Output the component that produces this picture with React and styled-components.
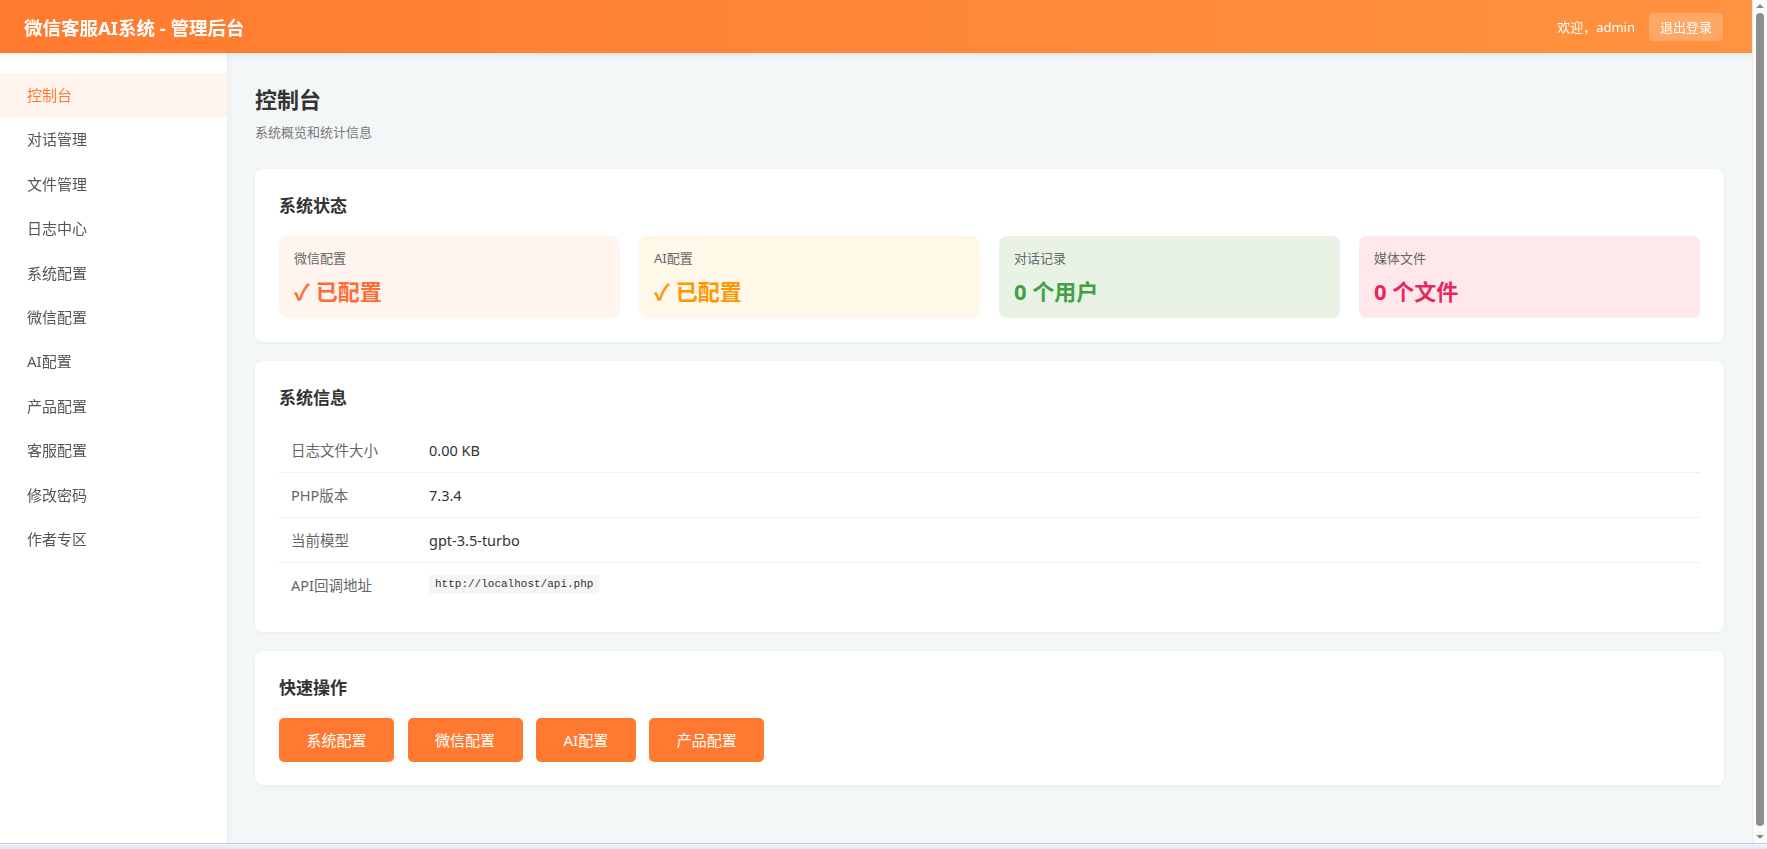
import React from "react";
import styled, { createGlobalStyle } from "styled-components";

const GlobalStyle = createGlobalStyle`
  * { box-sizing: border-box; }
  html, body { margin: 0; padding: 0; }
  body {
    font-family: "Noto Sans", "Noto Sans CJK SC", sans-serif;
    color: #333;
    background: #f4f7f8;
    overflow: hidden;
  }
`;

/* Window frame: scrolling viewport + its scroll rail, then the bottom edge */
const Frame = styled.div`
  height: 100vh;
  display: flex;
  flex-direction: column;
`;

const Viewport = styled.div`
  flex: 1;
  min-height: 0;
  display: flex;
`;

const Shell = styled.div`
  flex: 1;
  min-width: 0;
  overflow-y: auto;
  background: #f4f7f8;
  scrollbar-width: none;
  &::-webkit-scrollbar { display: none; }
`;

const Rail = styled.div`
  width: 15px;
  flex-shrink: 0;
  display: flex;
  flex-direction: column;
  align-items: center;
  background: #fafafa;
  border-left: 1px solid #ececec;
`;

const RailArrow = styled.div`
  height: 12px;
  width: 100%;
  display: flex;
  align-items: center;
  justify-content: center;

  &::before {
    content: "";
    width: 0;
    height: 0;
    border-left: 4px solid transparent;
    border-right: 4px solid transparent;
    ${(p) =>
      p.$down
        ? "border-top: 4px solid #8a8a8a;"
        : "border-bottom: 4px solid #8a8a8a;"}
  }
`;

const RailTrack = styled.div`
  flex: 1;
  width: 100%;
  display: flex;
  padding: 1px 3px 5px 3px;
`;

const RailThumb = styled.div`
  flex: 1;
  border-radius: 4px;
  background: #8e8e8e;
`;

const WindowEdge = styled.div`
  height: 6px;
  flex-shrink: 0;
  border-top: 1px solid #cbcbcb;
  background: linear-gradient(180deg, #f3f6fa 0%, #dce6f3 100%);
`;

const TopBar = styled.header`
  height: 53px;
  display: flex;
  align-items: center;
  justify-content: space-between;
  padding: 0 29px 0 24px;
  background: linear-gradient(90deg, #ff7a2f 0%, #ff8638 50%, #ff933f 100%);
  box-shadow: 0 2px 8px rgba(0, 0, 0, 0.08);
  position: relative;
  z-index: 2;
`;

const Brand = styled.h1`
  margin: 0;
  font-size: 18.5px;
  font-weight: 700;
  color: #fff;
`;

const UserArea = styled.div`
  display: flex;
  align-items: center;
  gap: 14px;
  font-size: 13px;
  color: #fff;
`;

const LogoutButton = styled.button`
  height: 28px;
  padding: 0 11px;
  border: none;
  border-radius: 4px;
  background: rgba(255, 255, 255, 0.2);
  color: #fff;
  font-family: inherit;
  font-size: 13px;
  cursor: pointer;
`;

const Body = styled.div`
  display: flex;
  min-height: calc(100vh - 50px);
`;

const Sidebar = styled.nav`
  width: 227px;
  flex-shrink: 0;
  background: #fff;
  padding-top: 20px;
  box-shadow: 2px 0 6px rgba(0, 0, 0, 0.04);
  position: relative;
  z-index: 1;
`;

const NavItem = styled.a`
  display: block;
  padding: 12px 27px;
  line-height: 20.4px;
  font-size: 15px;
  text-decoration: none;
  color: ${(p) => (p.$active ? "#ff7a30" : "#555")};
  background: ${(p) => (p.$active ? "#fff5ee" : "transparent")};
  cursor: pointer;
`;

const Main = styled.main`
  flex: 1;
  min-width: 0;
  padding: 30px 28px 28px;
`;

const PageTitle = styled.h2`
  margin: 0;
  font-size: 22px;
  line-height: 33px;
  font-weight: 700;
  color: #333;
`;

const PageSubtitle = styled.p`
  margin: 7px 0 26px;
  font-size: 13px;
  line-height: 19.5px;
  color: #777;
`;

const Card = styled.section`
  background: #fff;
  border-radius: 8px;
  padding: 24px 24px ${(p) => p.$bottom || 24}px;
  margin-bottom: 19px;
  box-shadow: 0 1px 4px rgba(0, 0, 0, 0.05);
`;

const CardTitle = styled.h3`
  margin: 0 0 17px;
  font-size: 17px;
  line-height: 26px;
  font-weight: 700;
  color: #333;
`;

const StatGrid = styled.div`
  display: grid;
  grid-template-columns: repeat(4, 1fr);
  gap: 19px;
`;

const StatCard = styled.div`
  background: ${(p) => p.$bg};
  border-radius: 8px;
  padding: 13px 15px 12px;
`;

const StatLabel = styled.div`
  font-size: 13px;
  line-height: 19px;
  color: #666;
`;

const StatValue = styled.div`
  margin-top: 8px;
  font-size: 22px;
  line-height: 30px;
  font-weight: 700;
  color: ${(p) => p.$color};
`;

const InfoTable = styled.div`
  display: grid;
  grid-template-columns: 138px 1fr;
`;

const InfoCell = styled.div`
  padding: 12px;
  line-height: 20px;
  font-size: 14.5px;
  color: ${(p) => (p.$label ? "#666" : "#333")};
  border-bottom: ${(p) => (p.$last ? "none" : "1px solid #f0f0f0")};
  display: flex;
  align-items: center;
`;

const Code = styled.code`
  font-family: "Liberation Mono", "DejaVu Sans Mono", monospace;
  font-size: 11px;
  line-height: 13px;
  padding: 3px 6px;
  background: #f5f5f5;
  border-radius: 3px;
  color: #333;
`;

const ActionRow = styled.div`
  display: flex;
  gap: 13.5px;
`;

const ActionButton = styled.button`
  height: 44px;
  padding: 0 27.5px;
  border: none;
  border-radius: 5px;
  background: #ff7a30;
  color: #fff;
  font-family: inherit;
  font-size: 15px;
  cursor: pointer;
`;

const navItems = [
  "控制台",
  "对话管理",
  "文件管理",
  "日志中心",
  "系统配置",
  "微信配置",
  "AI配置",
  "产品配置",
  "客服配置",
  "修改密码",
  "作者专区",
];

const stats = [
  { label: "微信配置", value: "✓ 已配置", bg: "#fff5ee", color: "#ff6b35" },
  { label: "AI配置", value: "✓ 已配置", bg: "#fff7e8", color: "#ff9800" },
  { label: "对话记录", value: "0 个用户", bg: "#e8f3e6", color: "#43a047" },
  { label: "媒体文件", value: "0 个文件", bg: "#ffe8eb", color: "#e8285a" },
];

const info = [
  { label: "日志文件大小", value: "0.00 KB" },
  { label: "PHP版本", value: "7.3.4" },
  { label: "当前模型", value: "gpt-3.5-turbo" },
  { label: "API回调地址", value: <Code>http://localhost/api.php</Code> },
];

const actions = ["系统配置", "微信配置", "AI配置", "产品配置"];

export default function App() {
  return (
    <>
      <GlobalStyle />
      <Frame>
        <Viewport>
          <Shell>
            <TopBar>
              <Brand>微信客服AI系统 - 管理后台</Brand>
              <UserArea>
                <span>欢迎，admin</span>
                <LogoutButton>退出登录</LogoutButton>
              </UserArea>
            </TopBar>
            <Body>
              <Sidebar>
                {navItems.map((item, i) => (
                  <NavItem key={item} $active={i === 0}>
                    {item}
                  </NavItem>
                ))}
              </Sidebar>
              <Main>
                <PageTitle>控制台</PageTitle>
                <PageSubtitle>系统概览和统计信息</PageSubtitle>

                <Card>
                  <CardTitle>系统状态</CardTitle>
                  <StatGrid>
                    {stats.map((s) => (
                      <StatCard key={s.label} $bg={s.bg}>
                        <StatLabel>{s.label}</StatLabel>
                        <StatValue $color={s.color}>{s.value}</StatValue>
                      </StatCard>
                    ))}
                  </StatGrid>
                </Card>

                <Card $bottom={25}>
                  <CardTitle>系统信息</CardTitle>
                  <InfoTable>
                    {info.map((row, i) => (
                      <React.Fragment key={row.label}>
                        <InfoCell $label $last={i === info.length - 1}>
                          {row.label}
                        </InfoCell>
                        <InfoCell $last={i === info.length - 1}>{row.value}</InfoCell>
                      </React.Fragment>
                    ))}
                  </InfoTable>
                </Card>

                <Card $bottom={23}>
                  <CardTitle>快速操作</CardTitle>
                  <ActionRow>
                    {actions.map((a) => (
                      <ActionButton key={a}>{a}</ActionButton>
                    ))}
                  </ActionRow>
                </Card>
              </Main>
            </Body>
          </Shell>
          <Rail>
            <RailArrow />
            <RailTrack>
              <RailThumb />
            </RailTrack>
            <RailArrow $down />
          </Rail>
        </Viewport>
        <WindowEdge />
      </Frame>
    </>
  );
}
